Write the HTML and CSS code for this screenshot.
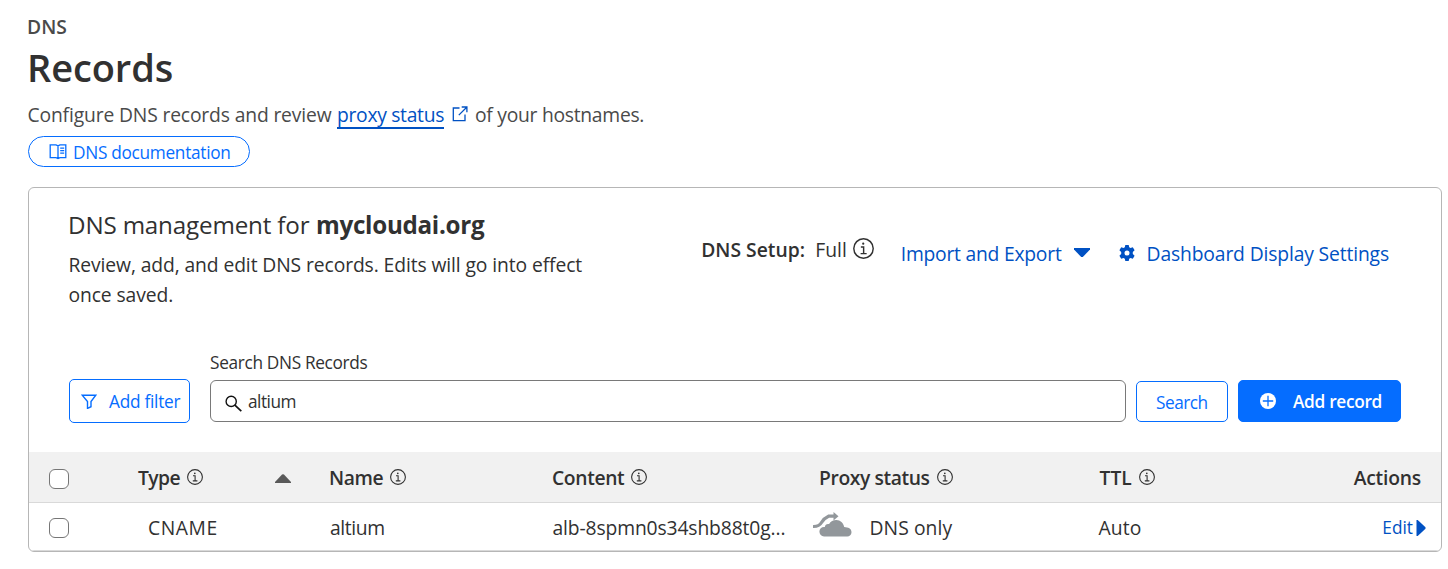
FILE: index.html
```
<!DOCTYPE html>
<html lang="en">
<head>
<meta charset="utf-8">
<title>DNS Records</title>
<link rel="stylesheet" href="styles.css">
</head>
<body>
<svg class="defs" aria-hidden="true">
  <symbol id="info" viewBox="0 0 16 16">
    <circle cx="8" cy="8" r="7.4" fill="none" stroke="currentColor" stroke-width="1.1"/>
    <circle cx="7.8" cy="4.3" r=".85" fill="currentColor"/>
    <path d="M6 6.8h2.1v5M5.8 11.9h4.6" fill="none" stroke="currentColor" stroke-width="1.1"/>
  </symbol>
</svg>
<main class="page">
  <header class="intro">
    <div class="eyebrow">DNS</div>
    <h1 class="heading">Records</h1>
    <p class="lead"><span class="lead-start">Configure DNS records and review</span><a class="lead-link">proxy status</a><svg class="external" viewBox="0 0 16 16"><path d="M7.5 2H1.3v12.7H13V8.5M9.7 1h5.2v5.2M14.7 1.2L6.8 9.1" fill="none" stroke="currentColor" stroke-width="1.3"/></svg><span class="lead-end">of your hostnames.</span></p>
    <a class="docs"><svg class="book" viewBox="0 0 18 17"><path d="M1.2 1.8H7L9 2.8l2-1h5.8v12.8H11l-2 .9-2-.9H1.2zM9 2.8v12.6" fill="none" stroke="currentColor" stroke-width="1.3"/><path d="M11.2 5.1h4M11.2 7.6h4M11.2 10.1h4" stroke="currentColor" stroke-width="1.1"/></svg><span>DNS documentation</span></a>
  </header>

  <section class="card">
    <div class="card-top">
      <div class="summary">
        <h2 class="title"><span class="title-text">DNS management for</span><b class="domain">mycloudai.org</b></h2>
        <p class="desc">Review, add, and edit DNS records. Edits will go into effect<br>once saved.</p>
      </div>
      <div class="tools">
        <div class="setup"><b class="setup-label">DNS Setup:</b><span>Full</span><svg class="info-lg"><use href="#info"/></svg></div>
        <a class="import"><span>Import and Export</span><svg class="caret" viewBox="0 0 16 9"><path d="M0 0h16v1.6L8.8 9H7.2L0 1.6z" fill="currentColor"/></svg></a>
        <a class="settings"><svg class="gear" viewBox="0 0 16 16"><path fill="currentColor" fill-rule="evenodd" d="M6.3 0h3.4l.5 2.3 1.3.8 2.3-.8 1.8 3-1.8 1.6v2.2l1.8 1.6-1.8 3-2.3-.8-1.3.8L9.7 16H6.3l-.5-2.3-1.3-.8-2.3.8-1.800-3 1.800-1.600V6.900L.4 5.300l1.800-3 2.300.8 1.300-.8zM8 5.500a2.500 2.500 0 1 0 0 5 2.500 2.500 0 0 0 0-5z"/></svg><span>Dashboard Display Settings</span></a>
      </div>
    </div>

    <div class="search-row">
      <button class="btn filter"><svg class="funnel" viewBox="0 0 16 15"><path d="M1.2 1.2h13.6L10 7.5v5.2l-3.5 1.7V7.5z" fill="none" stroke="currentColor" stroke-width="1.4"/></svg><span>Add filter</span></button>
      <div class="field">
        <label class="label">Search DNS Records</label>
        <div class="input"><svg class="lens" viewBox="0 0 17 17"><circle cx="6.2" cy="6.4" r="5.1" fill="none" stroke="#111" stroke-width="1.4"/><path d="M9.9 10.1l6.4 6.1" stroke="#111" stroke-width="1.7"/></svg><span class="value">altium</span></div>
      </div>
      <button class="btn search">Search</button>
      <button class="btn add"><svg class="plus" viewBox="0 0 16 16"><circle cx="8" cy="8" r="8" fill="#fff"/><path d="M8 2.8v10.4M2.8 8h10.4" stroke="#056dff" stroke-width="1.3"/></svg><span>Add record</span></button>
    </div>

    <div class="row head">
      <i class="check"></i>
      <div class="cell type"><span class="h-type">Type</span><svg class="info"><use href="#info"/></svg><svg class="sort" viewBox="0 0 16 9"><path d="M0 9V8L7 .6Q8-.3 9 .6L16 8v1z" fill="currentColor"/></svg></div>
      <div class="cell"><span class="h-name">Name</span><svg class="info"><use href="#info"/></svg></div>
      <div class="cell"><span class="h-content">Content</span><svg class="info"><use href="#info"/></svg></div>
      <div class="cell"><span class="h-proxy">Proxy status</span><svg class="info"><use href="#info"/></svg></div>
      <div class="cell"><span class="h-ttl">TTL</span><svg class="info"><use href="#info"/></svg></div>
      <div class="cell end"><span class="h-actions">Actions</span></div>
    </div>
    <div class="row record">
      <i class="check"></i>
      <div class="cell"><span class="v-type">CNAME</span></div>
      <div class="cell"><span class="v-name">altium</span></div>
      <div class="cell"><span class="v-content">alb-8spmn0s34shb88t0g...</span></div>
      <div class="cell"><svg class="cloud" viewBox="0 0 39 25"><path d="M0 14.5Q6 14.8 8.5 10.5T15.5 4.2H22" fill="none" stroke="currentColor" stroke-width="3.2"/><path d="M20.500 0l5 4.200-5 4.200z" fill="currentColor"/><path d="M11 24.500a4.800 4.800 0 0 1-4.600-4.900c0-2.900 2.100-4.700 4.700-4.700h.7c.3-2.200 2.100-3.300 4.300-2.800C17.500 9.300 20.300 8 23.300 8c4.100 0 7.100 2.900 7.900 7.100 4 .2 7.300 1.600 7.300 5.100 0 2.500-1.900 4.300-4.300 4.300z" fill="currentColor"/></svg><span class="v-proxy">DNS only</span></div>
      <div class="cell"><span class="v-ttl">Auto</span></div>
      <div class="cell end"><a class="edit"><span>Edit</span><svg class="play" viewBox="0 0 9 16"><path d="M0 0h1.2L9 7.3v1.4L1.2 16H0z" fill="currentColor"/></svg></a></div>
    </div>
  </section>
</main>
</body>
</html>
```
FILE: styles.css
```
* { box-sizing: border-box; }
body {
  margin: 0;
  background: #fff;
  color: #313131;
  font: 400 19.3px/30px "Open Sans", "Noto Sans", sans-serif;
}
h1, h2, p { margin: 0; font-weight: 400; }
svg { display: block; flex: none; }
span, b, a, label { white-space: nowrap; }
.defs { position: absolute; width: 0; height: 0; }
.page { padding: 12px 6px 0 28px; }

.intro { display: flex; flex-direction: column; align-items: flex-start; }
.eyebrow { font-size: 19.3px; font-weight: 600; line-height: 30px; letter-spacing: 0; color: #4a4a4a; margin-left: -1px; }
.heading { font-size: 38px; font-weight: 600; line-height: 50px; margin-left: -1px; letter-spacing: -.1px; }
.lead { display: flex; line-height: 26px; margin-top: 10px; color: #4a4a4a; }
.lead-start { width: 309px; letter-spacing: -.15px; margin-left: -.5px; }
.lead-link { height: 27px; width: 107px; margin-left: .5px; color: #0051c3; border-bottom: 2px solid #0051c3; letter-spacing: -.3px; }
.external { width: 16px; height: 16px; margin: 4px 0 0 8px; color: #0051c3; }
.lead-end { margin-left: 7px; letter-spacing: -.27px; }
.docs {
  display: flex; align-items: center;
  width: 222px; height: 31px; margin-top: 7px; padding: 2px 0 0 20px;
  border: 1px solid #056dff; border-radius: 16px;
  color: #056dff; font-size: 17.25px; letter-spacing: -.3px;
}
.book { width: 18px; height: 17px; margin: -3px 6px 0 0; }

.card {
  margin-top: 20px; height: 365px;
  border: 1px solid #b6b6b6; border-radius: 6px;
  overflow: hidden;
}
.card-top { display: flex; justify-content: space-between; height: 175px; padding: 21px 52px 0 39px; }
.title { display: flex; line-height: 32px; font-size: 24.2px; }
.title-text { width: 248px; letter-spacing: -.17px; }
.domain { font-weight: 700; letter-spacing: -.28px; }
.desc { margin: 9px 0 0 .5px; letter-spacing: -.1px; }
.tools { display: flex; margin-top: 25px; }
.setup { display: flex; height: 30px; }
.setup-label, .setup-label + span { position: relative; top: 1px; left: 1px; }
.setup-label { width: 114px; font-weight: 600; }
.info-lg { width: 21px; height: 21px; margin: 4px 0 0 7px; }
.import, .settings { display: flex; align-items: center; height: 30px; margin-top: 5px; color: #0051c3; }
.import { margin-left: 27px; letter-spacing: -.23px; }
.caret { width: 16px; height: 9px; margin: -3px 0 0 12px; }
.settings { margin-left: 29px; letter-spacing: -.14px; }
.gear { width: 16px; height: 16px; margin: -2px 12px 0 0; }

.search-row { display: flex; align-items: flex-end; height: 59px; padding: 0 40px 0 40px; font-size: 17.25px; }
.btn {
  display: flex; align-items: center;
  font: inherit; padding: 0; border: 1px solid #056dff; border-radius: 5px;
  background: #fff; color: #056dff;
}
.filter span, .value, .add span { padding-top: 2px; }
.filter { width: 121px; height: 44px; margin-bottom: -1px; padding-left: 11px; letter-spacing: -.26px; }
.funnel { width: 16px; height: 15px; margin-right: 12px; }
.field { flex: 1; margin: 0 10px 0 20px; }
.label { display: block; height: 30px; line-height: 32px; margin-bottom: 3px; letter-spacing: -.33px; }
.input { display: flex; align-items: center; height: 42px; padding-left: 14px; border: 1px solid #797979; border-radius: 6px; }
.lens { width: 17px; height: 17px; margin: 4px 6px 0 0; }
.value { letter-spacing: -.5px; }
.search { width: 92px; height: 41px; padding: 2px 0 0 19px; letter-spacing: -.5px; }
.add { width: 163px; height: 42px; margin-left: 10px; padding-left: 21px; background: #056dff; color: #fff; font-weight: 600; letter-spacing: -.3px; }
.plus { width: 16px; height: 16px; margin-right: 17px; }

.row {
  display: grid; align-items: center;
  grid-template-columns: 88px 192px 223px 267px 279px 100px 1fr;
  padding: 0 20px;
}
.head { height: 51px; margin-top: 30px; background: #f1f1f1; border-bottom: 1px solid #d9d9d9; font-weight: 600; }
.record { height: 48px; border-bottom: 1px solid #d9d9d9; }
.check { width: 20px; height: 20px; border: 1px solid #767676; border-radius: 6px; background: #fff; margin-top: 3px; }
.record .check { margin-top: 2px; }
.cell { display: flex; align-items: center; }
.cell span { padding-top: 2px; }
.end { justify-content: flex-end; }
.info { width: 16px; height: 16px; margin: -1px 0 0 7px; }
.sort { width: 16px; height: 9px; color: #595959; margin: 3px 0 0 72px; }
.h-type { letter-spacing: -.6px; margin-left: 1px; }
.h-name { letter-spacing: -.4px; }
.h-content { letter-spacing: -.35px; }
.h-proxy { letter-spacing: -.4px; }
.h-ttl { letter-spacing: 0; margin-left: 1.5px; }
.h-actions { letter-spacing: -.2px; }
.v-type { letter-spacing: .55px; margin-left: 11px; }
.v-name { letter-spacing: -.4px; margin-left: 1px; }
.v-content { letter-spacing: -.13px; margin-left: .5px; }
.cloud { width: 39px; height: 25px; margin: -4px 17px 0 -6px; color: #92979b; }
.v-proxy { letter-spacing: .08px; margin-left: .5px; }
.v-ttl { letter-spacing: .1px; margin-left: .5px; }
.edit { display: flex; align-items: center; margin-right: -5px; color: #0051c3; font-size: 17.25px; }
.edit span { padding-top: 3px; }
.play { width: 10px; height: 16px; margin: 2px 0 0 3px; }
```
